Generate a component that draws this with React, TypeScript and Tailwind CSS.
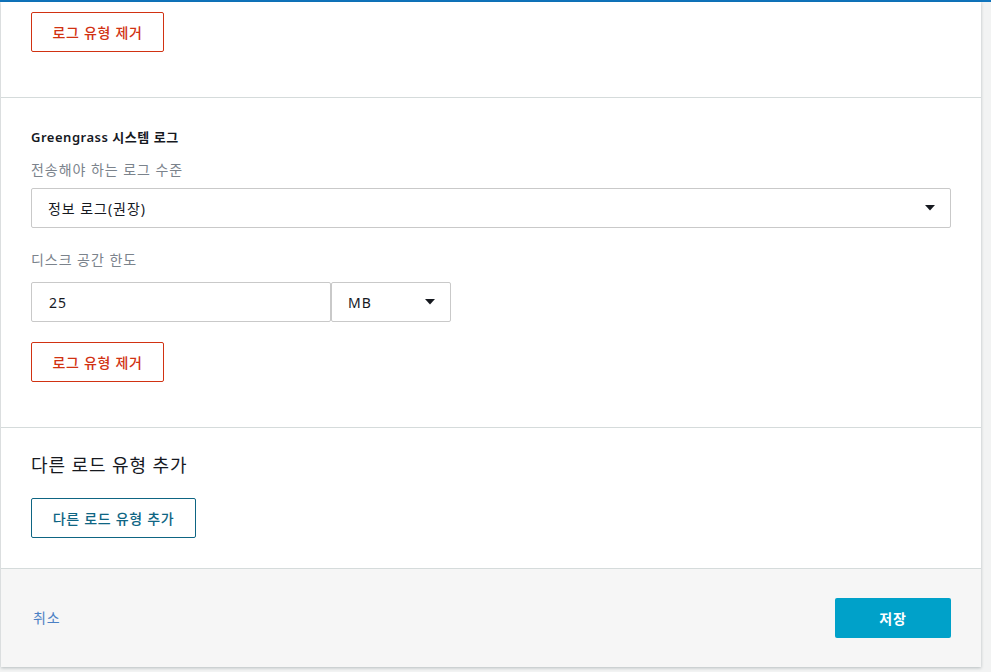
import React from 'react';

const font = "font-['Noto_Sans','Noto_Sans_CJK_KR',sans-serif]";

// Small filled caret used by the dropdowns
const Caret = () => (
  <svg width="10" height="6" viewBox="0 0 10 6" className="shrink-0">
    <path d="M0 0 L10 0 L5 5.5 Z" fill="#16191f" />
  </svg>
);

const RemoveButton = () => (
  <button className="h-10 w-[133px] rounded-[2px] border border-[#d13212] bg-white text-[14px] font-medium tracking-[0.05em] text-[#d13212]">
    로그 유형 제거
  </button>
);

const App: React.FC = () => {
  return (
    <div className={`${font} min-h-[672px] w-full bg-[#f2f3f3] text-[#16191f] tracking-[0.06em]`}>
      {/* top accent bar */}
      <div className="h-[2px] w-full bg-[#0f74bd]"></div>

      <div className="ml-[1px] w-[980px] bg-white shadow-[0_1px_3px_rgba(0,28,36,0.25)]">
        {/* Previous log type (tail) */}
        <div className="border-b border-[#d5dbdb] px-[30px] pt-[10px] pb-[45px]">
          <RemoveButton />
        </div>

        {/* Greengrass system logs */}
        <div className="border-b border-[#d5dbdb] px-[30px] pt-[30px] pb-[45px]">
          <h3 className="text-[13px] leading-[18px] font-semibold tracking-[0.04em]">Greengrass 시스템 로그</h3>
          <div className="mt-[14px] text-[14px] leading-[20px] text-[#7b838c]">전송해야 하는 로그 수준</div>
          <div className="mt-[8px] flex h-10 w-[920px] items-center justify-between rounded-[2px] border border-[#c9c9c9] pl-[16px] pr-[15px] text-[14px]">
            <span>정보 로그(권장)</span>
            <Caret />
          </div>

          <div className="mt-[22px] text-[14px] leading-[20px] text-[#7b838c]">디스크 공간 한도</div>
          <div className="mt-[12px] flex">
            <div className="flex h-10 w-[300px] items-center rounded-[2px] border border-[#c9c9c9] pl-[17px] text-[14px]">
              25
            </div>
            <div className="flex h-10 w-[120px] items-center justify-between rounded-[2px] border border-[#c9c9c9] pl-[16px] pr-[15px] text-[14px]">
              <span>MB</span>
              <Caret />
            </div>
          </div>

          <div className="mt-[20px]">
            <RemoveButton />
          </div>
        </div>

        {/* Add another log type */}
        <div className="border-b border-[#d5dbdb] px-[30px] pt-[24px] pb-[30px]">
          <h2 className="text-[18px] leading-[26px] tracking-[0.05em]">다른 로드 유형 추가</h2>
          <button className="mt-[20px] h-10 w-[165px] rounded-[2px] border border-[#0e6583] bg-white text-[14px] font-medium tracking-[0.05em] text-[#0e6583]">
            다른 로드 유형 추가
          </button>
        </div>

        {/* Footer */}
        <div className="flex items-center justify-between bg-[#f6f6f6] pl-[32px] pr-[30px] py-[29px]">
          <span className="-mt-[2px] text-[14px] text-[#4a80c4]">취소</span>
          <button className="h-10 w-[116px] rounded-[2px] bg-[#00a1c9] text-[14px] font-bold text-white">
            저장
          </button>
        </div>
      </div>
    </div>
  );
};

export default App;
